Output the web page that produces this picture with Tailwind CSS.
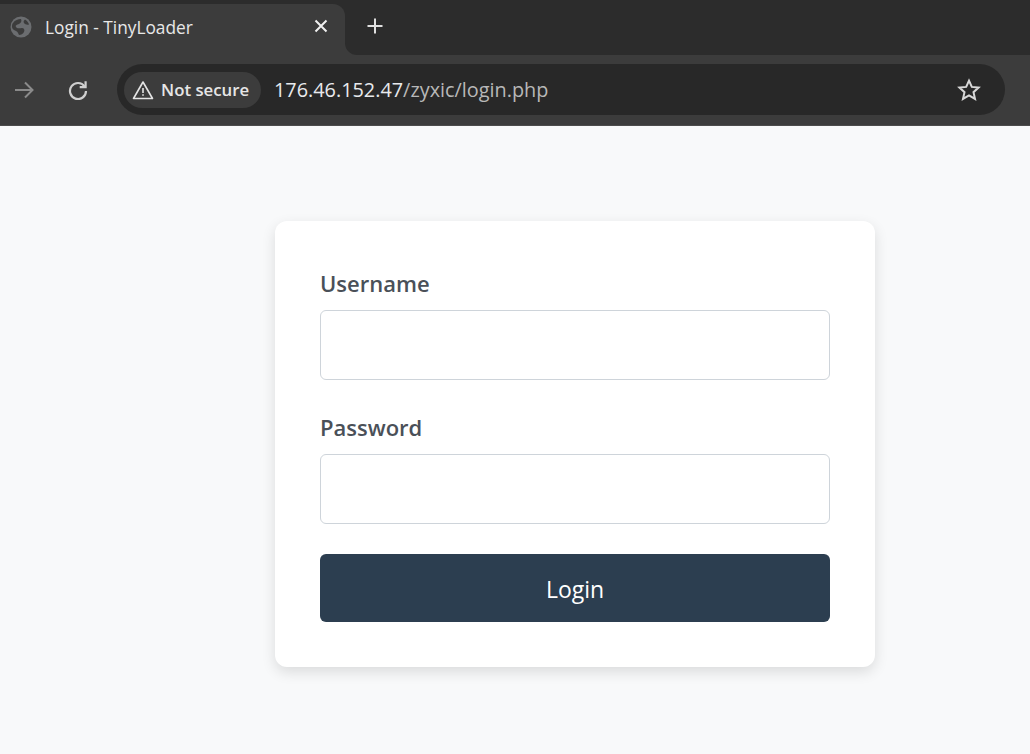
<!DOCTYPE html>
<html>
<head>
<meta charset="utf-8">
<title>Login - TinyLoader</title>
<script src="https://cdn.jsdelivr.net/npm/@tailwindcss/browser@4"></script>
</head>
<body class="w-[1030px] h-[754px] overflow-hidden bg-[#f8f9fa] font-['Open_Sans','Noto_Sans',sans-serif]">
<div class="h-[55px] bg-[#2c2c2c] pt-1 flex items-start">
  <div class="w-[345px] h-[51px] bg-[#3c3c3c] rounded-tr-[12px] flex items-center pl-[10px] pb-[5px] pr-[17px] relative">
    <svg class="w-[22px] h-[22px] shrink-0" viewBox="0 0 22 22"><circle cx="11" cy="11" r="10.5" fill="#6b6d70"/><path d="M3 7c2-3 5-4 8-4 1 2 0 4-2 5s-4 1-3 3 4 1 6 1 3 2 2 4-3 3-5 3c-1-2-1-3-3-4s-4-2-4-4 0-3 1-4zM15 3.500c2 1 3.500 3 4 5-2 .5-4 0-5-1.500s0-2.500 1-3.500z" fill="#3c3c3c"/></svg>
    <span class="ml-[13px] mt-[1px] text-[17.3px] leading-[24px] text-[#e8e8e8] whitespace-nowrap">Login - TinyLoader</span>
    <svg class="w-[14px] h-[14px] ml-auto -mt-[2px]" viewBox="0 0 14 14" fill="none" stroke="#f0f0f0" stroke-width="2"><path d="M1.500 1.500l11 11M12.500 1.500l-11 11"/></svg>
  </div>
  <div class="w-[12px] h-[51px] bg-[#3c3c3c] relative shrink-0">
    <div class="absolute inset-0 bg-[#2c2c2c] rounded-bl-[12px]"></div>
  </div>
  <svg class="w-[16px] h-[16px] mt-[14px] ml-[10px]" viewBox="0 0 16 16" fill="none" stroke="#e0e0e0" stroke-width="2"><path d="M8 .5v15M.5 8h15"/></svg>
</div>
<div class="h-[71px] bg-[#3c3c3c] border-b border-[#4c4c4c] flex items-start pt-[9px]">
  <svg class="w-[20px] h-[20px] ml-[14px] mt-[16px] shrink-0" viewBox="0 0 20 20" fill="none" stroke="#8a8a8a" stroke-width="2"><path d="M1 10h17M11 2.500l7.500 7.500-7.500 7.500"/></svg>
  <svg class="w-[20px] h-[20px] ml-[34px] mt-[16px] shrink-0" viewBox="0 0 20 20" fill="none" stroke="#cfcfcf" stroke-width="2.200"><path d="M16.600 6.500A8 8 0 1 0 18 11"/><path d="M17.600 1.200v5.900h-5.900" stroke-linejoin="miter"/></svg>
  <div class="ml-[29px] w-[888px] h-[51px] bg-[#282828] rounded-full flex items-center pl-[7px] pr-[24px]">
    <div class="h-[36px] w-[137px] bg-[#3c3c3c] rounded-full flex items-center pl-[8px] shrink-0">
      <svg class="w-[22px] h-[20px] shrink-0" viewBox="0 0 22 20" fill="none" stroke="#e4e4e4" stroke-width="1.600"><path d="M11 2L20.500 18.500H1.500z" stroke-linejoin="round"/><path d="M11 8v5M11 14.200v1.600"/></svg>
      <span class="ml-[7px] text-[16.800px] font-semibold text-[#e6e6e6] whitespace-nowrap">Not secure</span>
    </div>
    <div class="ml-[13px] text-[19.850px] whitespace-nowrap"><span class="text-[#e8eaed]">176.46.152.47</span><span class="text-[#b8b8b8]">/zyxic/login.php</span></div>
    <svg class="w-[24px] h-[24px] ml-auto" viewBox="0 0 24 24" fill="none" stroke="#d8d8d8" stroke-width="2"><path d="M12 2.600l2.800 6.300 6.800.7-5.100 4.600 1.500 6.700-6-3.500-6 3.500 1.500-6.700-5.100-4.600 6.800-.7z" stroke-linejoin="miter"/></svg>
  </div>
</div>
<div class="pt-[95px] pl-[275px]">
  <form class="w-[600px] h-[446px] bg-white rounded-[12px] shadow-[0_5px_14px_rgba(0,0,0,0.12)] px-[45px] pt-[45px]">
    <label class="block -mt-[1px] pb-[1px] text-[22px] leading-[36px] font-semibold text-[#4a5058]">Username</label>
    <div class="mt-[8px] h-[70px] rounded-[6px] border border-[#ced4da] bg-white"></div>
    <label class="block mt-[29px] pb-[1px] text-[22px] leading-[36px] font-semibold text-[#4a5058]">Password</label>
    <div class="mt-[8px] h-[70px] rounded-[6px] border border-[#ced4da] bg-white"></div>
    <button type="button" class="mt-[30px] w-full h-[68px] pt-[2px] rounded-[6px] bg-[#2c3e50] text-white text-[23px] flex items-center justify-center">Login</button>
  </form>
</div>
</body>
</html>
